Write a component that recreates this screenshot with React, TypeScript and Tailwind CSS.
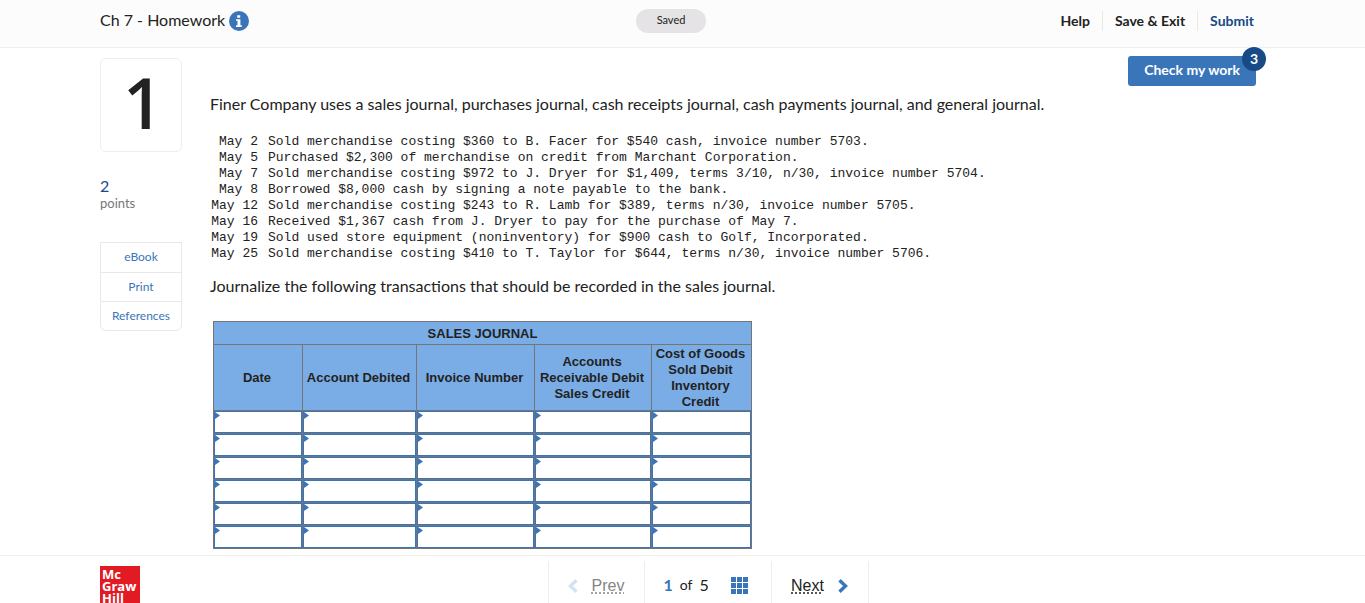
const transactions: [string, string][] = [
  ["May 2", "Sold merchandise costing $360 to B. Facer for $540 cash, invoice number 5703."],
  ["May 5", "Purchased $2,300 of merchandise on credit from Marchant Corporation."],
  ["May 7", "Sold merchandise costing $972 to J. Dryer for $1,409, terms 3/10, n/30, invoice number 5704."],
  ["May 8", "Borrowed $8,000 cash by signing a note payable to the bank."],
  ["May 12", "Sold merchandise costing $243 to R. Lamb for $389, terms n/30, invoice number 5705."],
  ["May 16", "Received $1,367 cash from J. Dryer to pay for the purchase of May 7."],
  ["May 19", "Sold used store equipment (noninventory) for $900 cash to Golf, Incorporated."],
  ["May 25", "Sold merchandise costing $410 to T. Taylor for $644, terms n/30, invoice number 5706."],
];

const columns = ["Date", "Account Debited", "Invoice Number", "Accounts Receivable Debit Sales Credit", "Cost of Goods Sold Debit Inventory Credit"];

function Header() {
  return (
    <header className="grid h-12 shrink-0 grid-cols-[1fr_auto_1fr] items-center border-b border-[#eeeeee] bg-[#fcfcfc] px-[100px] pb-[6px]">
      <div className="flex items-center gap-1">
        <h1 className="pb-px text-base">Ch 7 - Homework</h1>
        <button type="button" aria-label="Assignment information" className="rounded-full">
          <svg width="20" height="20" viewBox="0 0 20 20">
            <circle cx="10" cy="10" r="10" fill="#3a75b9" />
            <path d="M8.2 4.2h3v2.5h-3zM7 8.2h4.4v6h1.4v1.7H7v-1.7h1.5V9.8H7z" fill="#fff" />
          </svg>
        </button>
      </div>
      <span className="mr-[23px] rounded-full bg-[#e5e3e6] px-[21px] pb-[2px] text-[11px] leading-[22px]">Saved</span>
      <nav className="mr-[11px] flex items-center justify-end text-sm font-bold leading-5">
        <a href="#help" className="pr-3">Help</a>
        <a href="#exit" className="border-x border-[#e8e8e8] px-3">Save &amp; Exit</a>
        <a href="#submit" className="pl-3 text-[#174a86]">Submit</a>
      </nav>
    </header>
  );
}

function Sidebar() {
  return (
    <aside className="w-[82px] shrink-0 pt-[10px]">
      <div className="flex h-[94px] items-center justify-center rounded-md border border-[#eeeeee] pb-[6px] pl-1 font-['Open_Sans',sans-serif] text-[70px] font-semibold leading-none">1</div>
      <div className="mt-6 text-base leading-5 text-[#174a86]">2</div>
      <div className="text-[13px] leading-[14px] text-[#777777]">points</div>
      <nav className="mt-8 flex flex-col divide-y divide-[#e8e8e8] rounded-b-md border border-[#e8e8e8] text-center text-xs leading-7 text-[#3a75b9]">
        <a href="#ebook" className="pb-px">eBook</a>
        <a href="#print">Print</a>
        <a href="#references">References</a>
      </nav>
    </aside>
  );
}

function SalesJournal() {
  return (
    <table className="ml-[3px] mt-[23px] w-[539px] table-fixed border-collapse font-['Liberation_Sans',sans-serif] text-[13px] leading-4">
      <colgroup>
        <col className="w-[89px]" />
        <col className="w-[114px]" />
        <col className="w-[118px]" />
        <col className="w-[117px]" />
        <col className="w-[100px]" />
      </colgroup>
      <thead className="bg-[#7aade6]">
        <tr className="h-[23px]">
          <th colSpan={5} className="border border-[#757575] p-0 pt-px">SALES JOURNAL</th>
        </tr>
        <tr className="h-[66px]">
          {columns.map((name) => (
            <th key={name} className="border border-[#757575] p-0 pr-[2px] pt-px">{name}</th>
          ))}
        </tr>
      </thead>
      <tbody>
        {[1, 2, 3, 4, 5, 6].map((row) => (
          <tr key={row}>
            {columns.map((name) => (
              <td key={name} className="relative border border-[#757575] p-0">
                <input aria-label={`${name}, row ${row}`} className="block h-[22px] w-full border border-[#3a75b9] px-2 outline-none" />
                <svg className="pointer-events-none absolute left-px top-px" width="5" height="7" viewBox="0 0 5 7">
                  <path d="M0 0L5 3.5L0 7z" fill="#3a75b9" />
                </svg>
              </td>
            ))}
          </tr>
        ))}
      </tbody>
    </table>
  );
}

function Chevron({ d, className }: { d: string; className: string }) {
  return (
    <svg width="10" height="14" viewBox="0 0 10 14" fill="none" stroke="currentColor" strokeWidth="3.4" className={className}>
      <path d={d} />
    </svg>
  );
}

function Footer() {
  return (
    <footer className="relative flex h-12 shrink-0 items-start border-t border-[#f0f0f0] bg-white px-[100px]">
      <div className="flex flex-1 pt-[10px]">
        <div className="h-[37px] w-10 overflow-hidden bg-[#e21a23] pl-[2px] pt-[2px] font-['Open_Sans',sans-serif] text-[13px] font-bold leading-3 text-white">
          Mc<br />Graw<br />Hill
        </div>
      </div>
      <nav className="ml-[51px] mt-[5px] flex h-[42px] items-stretch divide-x divide-[#eeeeee] border-x border-[#eeeeee]">
        <button type="button" disabled className="flex w-24 items-center justify-center gap-[14px] pt-[7px] font-['Liberation_Sans',sans-serif] text-base text-[#858585]">
          <Chevron d="M8.5 1.2L2.5 7L8.5 12.8" className="text-[#d5e2f2]" />
          <span className="underline decoration-dotted underline-offset-2">Prev</span>
        </button>
        <div className="flex w-[127px] items-center gap-[22px] pl-[19px] pt-[7px]">
          <p className="flex items-center gap-[7px] pb-[2px] text-base"><b className="text-[#3a75b9]">1</b><span className="text-sm">of</span><span>5</span></p>
          <button type="button" aria-label="Question list">
            <svg width="17" height="17" viewBox="0 0 17 17" fill="#3a75b9">
              {[0, 6, 12].map((y) => [0, 6, 12].map((x) => <rect key={`${x}-${y}`} x={x} y={y} width="5" height="5" />))}
            </svg>
          </button>
        </div>
        <button type="button" className="flex w-24 items-center justify-center gap-[14px] pt-[7px] font-['Liberation_Sans',sans-serif] text-base">
          <span className="underline decoration-dotted underline-offset-2">Next</span>
          <Chevron d="M1.5 1.2L7.5 7L1.5 12.8" className="text-[#3a75b9]" />
        </button>
      </nav>
      <div className="flex-1" />
    </footer>
  );
}

export default function App() {
  return (
    <div className="flex h-screen flex-col overflow-hidden bg-white font-['Lato',sans-serif] text-[#222222]">
      <Header />
      <main className="flex min-h-0 flex-1 gap-7 px-[100px]">
        <Sidebar />
        <section className="min-w-0 flex-1">
          <div className="mr-[9px] flex justify-end pt-2">
            <button type="button" className="relative h-[30px] rounded-[3px] bg-[#3a75b9] px-4 pb-[2px] text-sm font-bold text-white">
              Check my work
              <span className="absolute -right-[10px] -top-[9px] size-6 rounded-full bg-[#174a86] leading-6">3</span>
            </button>
          </div>
          <p className="mt-[6px] text-base">Finer Company uses a sales journal, purchases journal, cash receipts journal, cash payments journal, and general journal.</p>
          <dl className="mt-[18px] grid grid-cols-[48px_1fr] gap-x-[10px] font-['Liberation_Mono',monospace] text-[13px] leading-4">
            {transactions.map(([date, text]) => (
              <div key={date} className="contents">
                <dt className="whitespace-nowrap text-right">{date}</dt>
                <dd>{text}</dd>
              </div>
            ))}
          </dl>
          <p className="mt-3 text-base">Journalize the following transactions that should be recorded in the sales journal.</p>
          <SalesJournal />
        </section>
      </main>
      <Footer />
    </div>
  );
}
